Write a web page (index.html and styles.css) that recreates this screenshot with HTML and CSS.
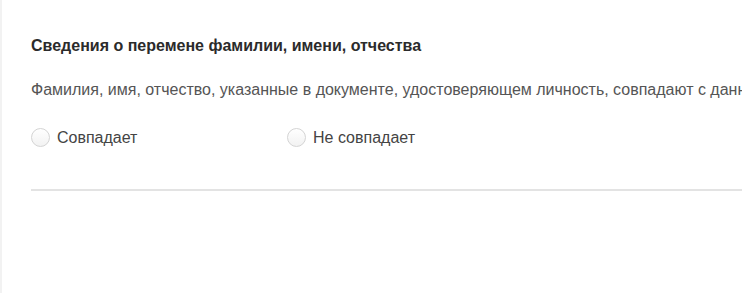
FILE: index.html
```html
<!DOCTYPE html>
<html lang="ru">
<head>
    <meta charset="UTF-8">
    <meta name="viewport" content="width=device-width, initial-scale=1.0">
    <title>Сведения о перемене ФИО</title>
    <link rel="stylesheet" href="styles.css">
</head>
<body>
    <div class="bloco">
        <h2 class="titulo">Сведения о перемене фамилии, имени, отчества</h2>
        <p class="pergunta">Фамилия, имя, отчество, указанные в документе, удостоверяющем личность, совпадают с данными свидетельства</p>
        <div class="opcoes">
            <label class="opcao">
                <input type="radio" name="fio" class="radio">
                <span>Совпадает</span>
            </label>
            <label class="opcao">
                <input type="radio" name="fio" class="radio">
                <span>Не совпадает</span>
            </label>
        </div>
        <div class="linha"></div>
    </div>
</body>
</html>
```

FILE: styles.css
```css
* {
    border: none;
    padding: 0px;
    margin: 0px;
    box-sizing: border-box;
}

body {
    font-family: Arial, "Liberation Sans", sans-serif;
    background-color: #fff;
    color: #333;
    overflow: hidden;
}

.bloco {
    width: 100vw;
    height: 100vh;
    border-left: 2px solid #f2f2f2;
    padding: 36px 0px 0px 29px;
    white-space: nowrap;
    overflow: hidden;
}

.titulo {
    font-size: 16px;
    font-weight: bold;
    color: #2b2b2b;
    line-height: 20px;
}

.pergunta {
    font-size: 16px;
    color: #555;
    line-height: 20px;
    margin-top: 24px;
}

.opcoes {
    display: flex;
    margin-top: 28px;
}

.opcao {
    display: flex;
    align-items: center;
    width: 256px;
    font-size: 16px;
    color: #444;
    cursor: pointer;
}

.radio {
    appearance: none;
    width: 19px;
    height: 19px;
    border-radius: 50%;
    border: 1px solid #d4d4d4;
    background: linear-gradient(#fff, #f2f2f2);
    margin-right: 7px;
}

.linha {
    height: 2px;
    background-color: #e3e3e3;
    margin-top: 42px;
}
```
